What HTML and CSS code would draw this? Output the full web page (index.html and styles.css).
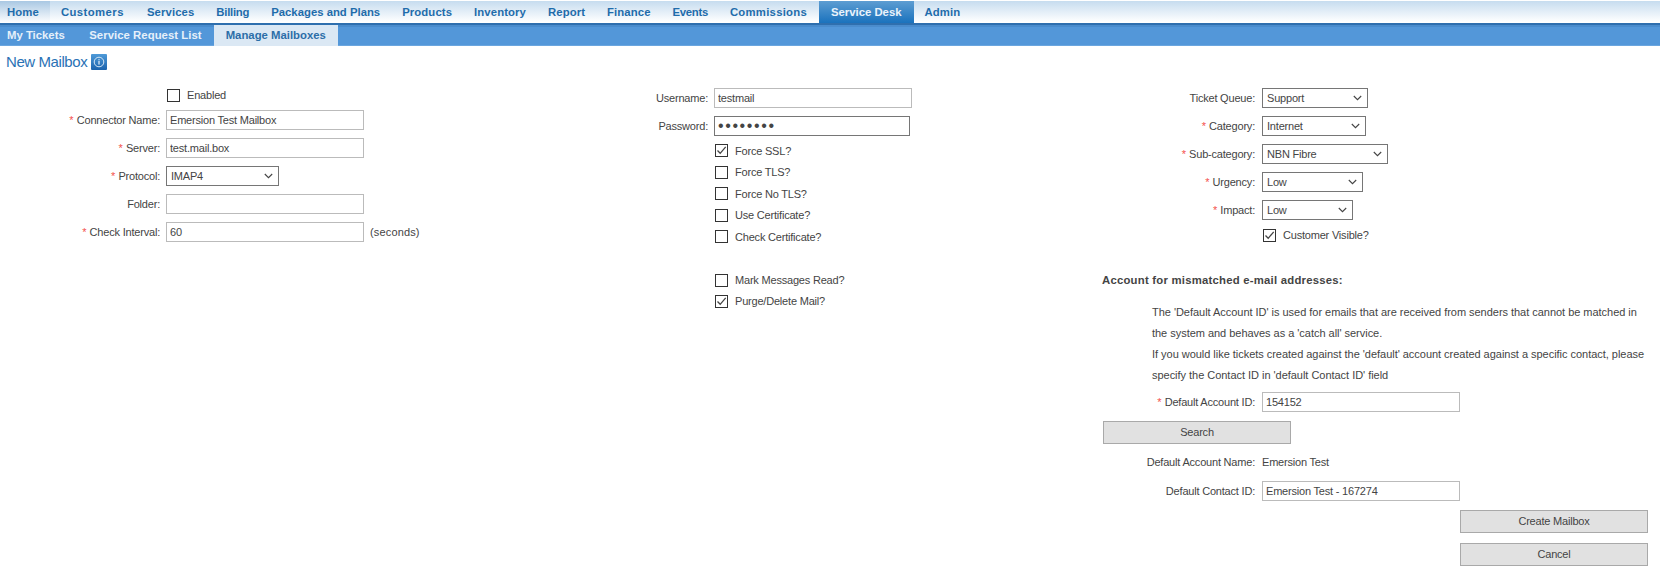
FILE: index.html
```html
<!DOCTYPE html>
<html lang="en">
<head>
<meta charset="utf-8">
<title>New Mailbox</title>
<link rel="stylesheet" href="styles.css">
</head>
<body>
<nav class="topnav">
  <a class="tab tab-home">Home</a>
  <a class="tab tab-customers">Customers</a>
  <a class="tab tab-services">Services</a>
  <a class="tab tab-billing">Billing</a>
  <a class="tab tab-packages">Packages and Plans</a>
  <a class="tab">Products</a>
  <a class="tab">Inventory</a>
  <a class="tab">Report</a>
  <a class="tab">Finance</a>
  <a class="tab tab-events">Events</a>
  <a class="tab tab-commissions">Commissions</a>
  <a class="tab tab-active">Service Desk</a>
  <a class="tab">Admin</a>
</nav>
<nav class="subnav">
  <a class="subtab subtab-first">My Tickets</a>
  <a class="subtab subtab-list">Service Request List</a>
  <a class="subtab subtab-active">Manage Mailboxes</a>
</nav>
<header class="title">
  <h1>New Mailbox</h1>
  <svg class="info" width="16" height="16" viewBox="0 0 16 16" aria-hidden="true">
    <defs><linearGradient id="ig" x1="0" y1="0" x2="0" y2="1"><stop offset="0" stop-color="#4f9ad8"/><stop offset="1" stop-color="#1a62ad"/></linearGradient></defs>
    <rect width="16" height="16" rx="1" fill="url(#ig)"/>
    <circle cx="8" cy="8" r="4.8" fill="none" stroke="#d5e6f5" stroke-width="1"/>
    <rect x="7.4" y="7" width="1.2" height="3.6" fill="#e4eff9"/>
    <rect x="7.4" y="5.2" width="1.2" height="1.1" fill="#e4eff9"/>
  </svg>
</header>
<main class="form">
  <section class="col col-1">
    <div class="row row-check"><span class="lab"></span><label class="check"><input type="checkbox"><span>Enabled</span></label></div>
    <div class="row"><label class="lab"><b>*</b> Connector Name:</label><input class="field" type="text" value="Emersion Test Mailbox"></div>
    <div class="row"><label class="lab"><b>*</b> Server:</label><input class="field" type="text" value="test.mail.box"></div>
    <div class="row"><label class="lab"><b>*</b> Protocol:</label><select class="pick w113"><option>IMAP4</option></select></div>
    <div class="row"><label class="lab">Folder:</label><input class="field" type="text"></div>
    <div class="row"><label class="lab"><b>*</b> Check Interval:</label><input class="field" type="text" value="60"><span class="unit">(seconds)</span></div>
  </section>
  <section class="col col-2">
    <div class="row"><label class="lab">Username:</label><input class="field" type="text" value="testmail"></div>
    <div class="row"><label class="lab">Password:</label><input class="field field-focus" type="password" value="testmail"></div>
    <div class="checks">
      <label class="check"><input type="checkbox" checked><span>Force SSL?</span></label>
      <label class="check"><input type="checkbox"><span>Force TLS?</span></label>
      <label class="check"><input type="checkbox"><span>Force No TLS?</span></label>
      <label class="check"><input type="checkbox"><span>Use Certificate?</span></label>
      <label class="check"><input type="checkbox"><span>Check Certificate?</span></label>
    </div>
    <div class="checks checks-low">
      <label class="check"><input type="checkbox"><span>Mark Messages Read?</span></label>
      <label class="check"><input type="checkbox" checked><span>Purge/Delete Mail?</span></label>
    </div>
  </section>
  <section class="col col-3">
    <div class="row"><label class="lab">Ticket Queue:</label><select class="pick w106"><option>Support</option></select></div>
    <div class="row"><label class="lab"><b>*</b> Category:</label><select class="pick w104"><option>Internet</option></select></div>
    <div class="row"><label class="lab"><b>*</b> Sub-category:</label><select class="pick w126"><option>NBN Fibre</option></select></div>
    <div class="row"><label class="lab"><b>*</b> Urgency:</label><select class="pick w101"><option>Low</option></select></div>
    <div class="row"><label class="lab"><b>*</b> Impact:</label><select class="pick w91"><option>Low</option></select></div>
    <div class="row row-check"><span class="lab"></span><label class="check"><input type="checkbox" checked><span>Customer Visible?</span></label></div>
    <h2>Account for mismatched e-mail addresses:</h2>
    <p class="note">The 'Default Account ID' is used for emails that are received from senders that cannot be matched in the system and behaves as a 'catch all' service.<br>If you would like tickets created against the 'default' account created against a specific contact, please specify the Contact ID in 'default Contact ID' field</p>
    <div class="row"><label class="lab"><b>*</b> Default Account ID:</label><input class="field" type="text" value="154152"></div>
    <button class="btn btn-search" type="button">Search</button>
    <div class="row"><span class="lab">Default Account Name:</span><span>Emersion Test</span></div>
    <div class="row row-contact"><label class="lab">Default Contact ID:</label><input class="field" type="text" value="Emersion Test - 167274"></div>
    <div class="actions">
      <button class="btn" type="button">Create Mailbox</button>
      <button class="btn" type="button">Cancel</button>
    </div>
  </section>
</main>
</body>
</html>
```
FILE: styles.css
```css
* { box-sizing: border-box; }
html, body { margin: 0; padding: 0; }
body {
  background: #fff;
  color: #444;
  font: 11px "Liberation Sans", Arial, sans-serif;
  letter-spacing: -.2px;
  height: 573px;
  overflow: hidden;
}
.topnav {
  display: flex;
  height: 24px;
  margin-top: 1px;
  background: linear-gradient(#c6dcef, #fff 95%);
  border-bottom: 2px solid #2f6fae;
}
.tab {
  padding: 0 11px;
  line-height: 22px;
  font-weight: bold;
  font-size: 11.33px;
  letter-spacing: .1px;
  color: #1f6cab;
  white-space: nowrap;
}
.tab-home {
  padding: 0 11px 0 7px;
  background: linear-gradient(#a9c8e3, #fff);
}
.tab-customers { letter-spacing: .43px; padding-right: 12px; }
.tab-services { letter-spacing: .1px; }
.tab-billing { letter-spacing: -.25px; }
.tab-packages { letter-spacing: 0; }
.tab-events { letter-spacing: -.3px; }
.tab-commissions { letter-spacing: .25px; padding-right: 12px; }
.tab-active {
  padding: 0 12px;
  letter-spacing: 0;
  color: #eaf3fb;
  background: linear-gradient(#5d9dd2, #1a72bd);
}
.subnav {
  display: flex;
  height: 21px;
  background: #5397d9;
  border-bottom: 1px solid #6ba6df;
  box-shadow: inset 0 2px 0 #4a8ccd;
}
.subtab {
  padding: 0 12px;
  line-height: 21px;
  font-weight: bold;
  font-size: 11.33px;
  letter-spacing: 0;
  color: #e6f0fa;
  white-space: nowrap;
}
.subtab-first { padding: 0 12.5px 0 7px; }
.subtab-list { letter-spacing: .05px; }
.subtab-active {
  color: #2c6ea8;
  background: #dbe8f4;
  height: 21px;
}
.title {
  display: flex;
  align-items: center;
  gap: 4px;
  height: 16px;
  margin: 8px 0 0 6px;
}
h1 {
  margin: -2px 0 0;
  font-size: 15px;
  font-weight: normal;
  letter-spacing: -.42px;
  color: #2a72b5;
}
.info { display: block; }
.form {
  display: grid;
  grid-template-columns: 553px 549px 558px;
  margin-top: 18px;
}
.col { display: flex; flex-direction: column; gap: 8px; }
.row { display: flex; align-items: center; gap: 6px; height: 20px; }
.lab { flex: none; text-align: right; white-space: nowrap; }
.lab b { margin-right: .5px; font-weight: normal; color: #f4524d; }
.col-1 .lab { width: 160px; }
.col-2 .lab { width: 155px; }
.col-3 .lab { width: 153px; }
.col-3 > .row { gap: 7px; }
.field {
  width: 198px;
  height: 20px;
  padding: 0 3px;
  border: 1px solid #bbb;
  border-radius: 0;
  outline: 0;
  font: inherit;
  letter-spacing: inherit;
  color: #444;
  background: #fff;
}
.field-focus { width: 196px; border-color: #767676; font-size: 16px; letter-spacing: 1.6px; }
.unit { letter-spacing: .15px; }
.pick {
  appearance: none;
  height: 20px;
  padding: 0 4px;
  border: 1px solid #767676;
  border-radius: 0;
  font: inherit;
  letter-spacing: inherit;
  color: #444;
  background: #fff url("data:image/svg+xml,%3Csvg xmlns='http://www.w3.org/2000/svg' width='9' height='6'%3E%3Cpath d='M.8 1l3.700 3.700L8.200 1' fill='none' stroke='%23444' stroke-width='1.100'/%3E%3C/svg%3E") no-repeat right 5px center;
}
.w113 { width: 113px; }
.w106 { width: 106px; }
.w104 { width: 104px; }
.w126 { width: 126px; }
.w101 { width: 101px; }
.w91 { width: 91px; }
.row-check { height: 14px; }
.check { display: flex; align-items: center; gap: 7px; height: 13px; white-space: nowrap; }
.check input {
  appearance: none;
  flex: none;
  width: 13px;
  height: 13px;
  margin: 0 0 0 1px;
  border: 1px solid #333;
  border-radius: 0;
  background: #fff;
}
.check input:checked {
  background: #fff url("data:image/svg+xml,%3Csvg xmlns='http://www.w3.org/2000/svg' width='11' height='11'%3E%3Cpath d='M1.500 5.500l2.700 2.800L9.700 1.800' fill='none' stroke='%23444' stroke-width='1.300'/%3E%3C/svg%3E") no-repeat center;
}
.checks {
  display: flex;
  flex-direction: column;
  gap: 8.5px;
  padding: .4px 0 0 161px;
}
.checks-low { gap: 8px; margin-top: 22.200px; }
.col-3 h2 {
  margin: 23px 0 0;
  font-size: 11.33px;
  font-weight: bold;
  letter-spacing: .23px;
  line-height: 14px;
}
.note {
  margin: 6.5px 0 -1.5px 50px;
  width: 497px;
  letter-spacing: -.03px;
  line-height: 21px;
}
.btn {
  display: block;
  width: 188px;
  height: 23px;
  padding: 0 0 2px;
  border: 1px solid #a9a9a9;
  border-radius: 0;
  background: #e1e1e1;
  font: inherit;
  letter-spacing: inherit;
  color: #444;
}
.btn-search { margin: 1px 0 0 1px; }
.row-contact { margin-top: 1px; }
.actions { display: flex; flex-direction: column; gap: 10px; margin: 1px 0 0 358px; }
```
